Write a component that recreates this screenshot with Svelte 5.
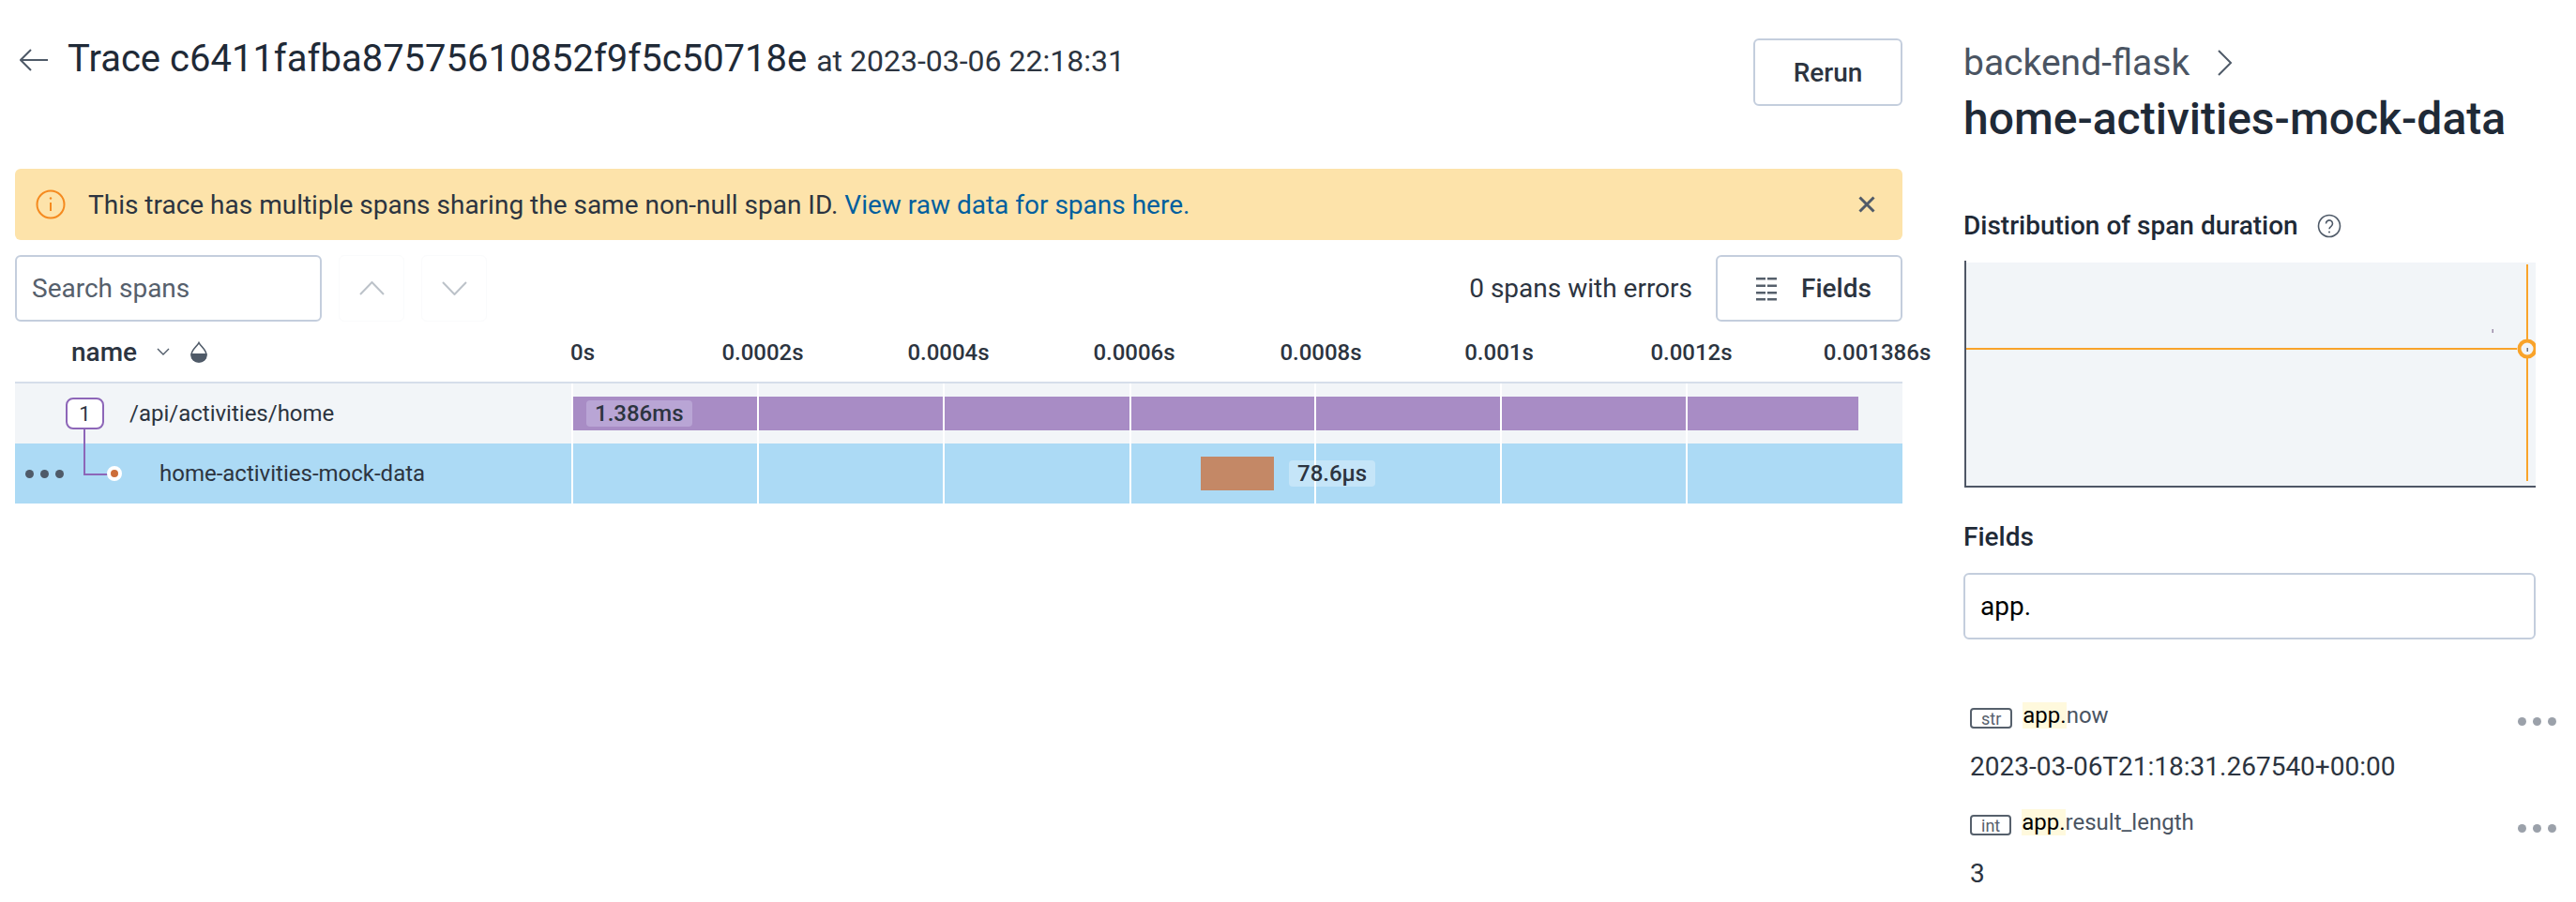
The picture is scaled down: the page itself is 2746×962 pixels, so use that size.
<script>
    const ticks = [
        { label: "0s", x: 12 },
        { label: "0.0002s", x: 204 },
        { label: "0.0004s", x: 402 },
        { label: "0.0006s", x: 600 },
        { label: "0.0008s", x: 799 },
        { label: "0.001s", x: 989 },
        { label: "0.0012s", x: 1194 },
        { label: "0.001386s", x: 1392 }
    ];
    const gridlines = [0, 198, 396, 595, 792, 990, 1188];

    const fields = [
        { type: "str", name: "now", value: "2023-03-06T21:18:31.267540+00:00" },
        { type: "int", name: "result_length", value: "3" }
    ];
</script>

<div class="page">
    <main class="main">
        <header class="top">
            <svg class="back" width="30" height="24" viewBox="0 0 30 24" fill="none" stroke="#4f5a68" stroke-width="2">
                <path d="M30 12H1M12 1 1 12l11 11" />
            </svg>
            <h1>Trace c6411fafba87575610852f9f5c50718e <small>at 2023-03-06 22:18:31</small></h1>
            <button class="btn rerun">Rerun</button>
        </header>

        <div class="banner">
            <svg width="32" height="32" viewBox="0 0 32 32" fill="none" stroke="#f58a1f" stroke-width="2">
                <circle cx="16" cy="16" r="14.5" />
                <path d="M16 14v9" />
                <circle cx="16" cy="9.5" r="1.2" fill="#f58a1f" stroke="none" />
            </svg>
            <p>This trace has multiple spans sharing the same non-null span ID. <a href="#raw">View raw data for spans here.</a></p>
            <svg class="close" width="18" height="18" viewBox="0 0 18 18" fill="none" stroke="#505a68" stroke-width="3">
                <path d="M1.500 1.500l15 15M16.500 1.500l-15 15" />
            </svg>
        </div>

        <div class="toolbar">
            <input class="search" placeholder="Search spans" />
            <button class="nav" aria-label="previous">
                <svg width="27" height="15" viewBox="0 0 27 15" fill="none" stroke="#bcc2c9" stroke-width="2"><path d="M1 14 13.500 1 26 14" /></svg>
            </button>
            <button class="nav" aria-label="next">
                <svg width="27" height="15" viewBox="0 0 27 15" fill="none" stroke="#bcc2c9" stroke-width="2"><path d="M1 1l12.500 13L26 1" /></svg>
            </button>
            <span class="errors">0 spans with errors</span>
            <button class="btn fields-btn">
                <svg width="22" height="26" viewBox="0 0 22 26" fill="#56606c">
                    <path d="M0 1h10v2.500H0zM12 1h10v2.500H12zM0 8.500h10v2.500H0zM12 8.500h10v2.500H12zM0 16h10v2.500H0zM12 16h10v2.500H12zM0 23h10v2.500H0zM12 23h10v2.500H12z" />
                </svg>
                Fields
            </button>
        </div>

        <div class="thead">
            <div class="name-col head-name">
                <span>name</span>
                <svg width="14" height="8" viewBox="0 0 14 8" fill="none" stroke="#4f5a68" stroke-width="1.4"><path d="M1 1l6 6 6-6" /></svg>
                <svg class="drop" width="18" height="23" viewBox="0 0 18 23">
                    <path d="M9 1.500C7 5.500 1 9 1 14.500a8 7.500 0 0 0 16 0C17 9 11 5.500 9 1.500Z" fill="#fff" stroke="#4f5a68" stroke-width="1.6" />
                    <path d="M.5 13h17v1.500a8.500 8 0 0 1-17 0Z" fill="#4f5a68" />
                </svg>
            </div>
            <div class="axis">
                {#each ticks as tick}
                    <span class="tick" style="left: {tick.x}px">{tick.label}</span>
                {/each}
            </div>
        </div>

        <div class="row root">
            <div class="name-col">
                <span class="count">1</span>
                <span class="span-name">/api/activities/home</span>
            </div>
            <div class="timeline">
                <div class="bar purple"></div>
                {#each gridlines as g}
                    <i class="grid" style="left: {g}px"></i>
                {/each}
                <span class="bar-label root-label">1.386ms</span>
            </div>
        </div>

        <div class="row selected">
            <div class="name-col">
                <span class="more"><i></i><i></i><i></i></span>
                <span class="elbow"></span>
                <span class="node"></span>
                <span class="span-name child">home-activities-mock-data</span>
            </div>
            <div class="timeline">
                <div class="bar orange"></div>
                {#each gridlines as g}
                    <i class="grid" style="left: {g}px"></i>
                {/each}
                <span class="bar-label child-label">78.6μs</span>
            </div>
        </div>
    </main>

    <aside class="side">
        <div class="crumb">
            <span>backend-flask</span>
            <svg width="16" height="28" viewBox="0 0 16 28" fill="none" stroke="#4f5a68" stroke-width="2"><path d="M1 1l13 13L1 27" /></svg>
        </div>
        <h2>home-activities-mock-data</h2>

        <h3 class="dist">
            Distribution of span duration
            <svg width="26" height="26" viewBox="0 0 26 26" fill="none" stroke="#4f5a68" stroke-width="1.6">
                <circle cx="13" cy="13" r="11.500" />
                <path d="M9.500 10.500a3.500 3.500 0 1 1 5.500 2.800c-1.300.9-2 1.500-2 3" />
                <circle cx="13" cy="19.500" r="1" fill="#4f5a68" stroke="none" />
            </svg>
        </h3>

        <svg class="chart" width="609" height="243" viewBox="0 0 609 243">
            <rect x="2" y="2" width="607" height="239" fill="#f2f5f8" />
            <path d="M1 0V241H609" fill="none" stroke="#4f5766" stroke-width="2" />
            <path d="M2 94H589M600 4V235" fill="none" stroke="#f9a32a" stroke-width="2" />
            <circle cx="600" cy="94" r="8.500" fill="#f2f5f8" stroke="#f9a32a" stroke-width="4" />
            <rect x="599.500" y="93" width="1.500" height="4" fill="#6d7280" />
            <rect x="562.500" y="73" width="1.500" height="4" fill="#9b8ba8" />
        </svg>

        <h3 class="fields-title">Fields</h3>
        <input class="field-search" value="app." />

        <div class="field-list">
            {#each fields as f}
                <div class="field">
                    <div class="field-head">
                        <span class="badge">{f.type}</span>
                        <span class="field-name"><mark>app.</mark>{f.name}</span>
                        <span class="more grey"><i></i><i></i><i></i></span>
                    </div>
                    <div class="field-value">{f.value}</div>
                </div>
            {/each}
        </div>
    </aside>
</div>

<style>
    :global(body) {
        background: #fff;
        font-family: Roboto, sans-serif;
        color: #2c3440;
    }

    .page {
        display: flex;
        gap: 65px;
        width: 2746px;
        height: 962px;
        padding-left: 16px;
        box-sizing: border-box;
        overflow: hidden;
    }

    .main {
        width: 2012px;
        flex: none;
    }

    .top {
        display: flex;
        align-items: flex-start;
        height: 72px;
        margin-top: 41px;
    }

    .back {
        margin: 11px 21px 0 5px;
        flex: none;
    }

    h1 {
        margin: 0;
        font-size: 40px;
        line-height: 44px;
        font-weight: 400;
        color: #1f2a37;
        white-space: nowrap;
    }

    h1 small {
        font-size: 32px;
        color: #2c3440;
    }

    .btn {
        border: 2px solid #c4cedd;
        border-radius: 6px;
        background: #fff;
        font: 500 28px Roboto, sans-serif;
        color: #2c3440;
    }

    .rerun {
        margin-left: auto;
        width: 159px;
        height: 72px;
    }

    .banner {
        display: flex;
        align-items: center;
        height: 76px;
        margin-top: 67px;
        padding: 0 29px 0 22px;
        background: #fde3aa;
        border-radius: 6px;
        font-size: 28px;
    }

    .banner p {
        margin: 0 0 0 24px;
        color: #2c3440;
    }

    .banner a {
        color: #005f9e;
        text-decoration: none;
    }

    .close {
        margin-left: auto;
    }

    .toolbar {
        display: flex;
        align-items: center;
        height: 71px;
        margin-top: 16px;
    }

    .search {
        width: 327px;
        height: 71px;
        box-sizing: border-box;
        padding: 0 16px;
        border: 2px solid #c4cedd;
        border-radius: 6px;
        font: 28px Roboto, sans-serif;
    }

    .search::placeholder {
        color: #56606c;
        opacity: 1;
    }

    .nav {
        width: 70px;
        height: 71px;
        padding: 0;
        background: #fff;
        border: 1px solid #fafbfc;
        border-radius: 6px;
        margin-left: 18px;
        display: flex;
        align-items: center;
        justify-content: center;
    }

    .errors {
        margin-left: auto;
        font-size: 28px;
    }

    .fields-btn {
        display: flex;
        align-items: center;
        justify-content: center;
        gap: 26px;
        width: 199px;
        height: 71px;
        margin-left: 25px;
        padding-left: 16px;
    }

    .thead {
        display: flex;
        align-items: center;
        height: 66px;
        border-bottom: 2px solid #d6deea;
        box-sizing: border-box;
    }

    .name-col {
        position: relative;
        display: flex;
        align-items: center;
        width: 593px;
        flex: none;
        box-sizing: border-box;
    }

    .head-name {
        padding-left: 60px;
        font-size: 28px;
        font-weight: 500;
    }

    .head-name svg {
        margin-left: 21px;
    }

    .head-name .drop {
        margin-left: 22px;
    }

    .axis {
        position: relative;
        flex: 1;
        height: 100%;
    }

    .tick {
        position: absolute;
        top: 19px;
        transform: translateX(-50%);
        font-size: 24px;
        font-weight: 500;
        line-height: 28px;
        white-space: nowrap;
    }

    .row {
        display: flex;
        height: 64px;
    }

    .root {
        background: #f2f5f8;
    }

    .selected {
        background: #acdaf5;
    }

    .count {
        margin-left: 54px;
        width: 41px;
        height: 34px;
        box-sizing: border-box;
        display: flex;
        align-items: center;
        justify-content: center;
        background: #fff;
        border: 2px solid #8d66b8;
        border-radius: 8px;
        font-size: 22px;
    }

    .span-name {
        margin-left: 27px;
        font-size: 24px;
    }

    .span-name.child {
        margin-left: 154px;
    }

    .more {
        display: flex;
        gap: 7px;
    }

    .more i {
        width: 9px;
        height: 9px;
        border-radius: 50%;
        background: #4f5a68;
    }

    .name-col > .more {
        position: absolute;
        left: 11px;
        top: 28px;
    }

    .elbow {
        position: absolute;
        left: 73px;
        top: -15px;
        width: 25px;
        height: 47px;
        border-left: 2px solid #8d66b8;
        border-bottom: 2px solid #8d66b8;
    }

    .node {
        position: absolute;
        left: 98px;
        top: 24px;
        width: 8px;
        height: 8px;
        border: 4px solid #fff;
        border-radius: 50%;
        background: #cc6d39;
        box-sizing: content-box;
    }

    .timeline {
        position: relative;
        flex: 1;
    }

    .grid {
        position: absolute;
        top: 0;
        bottom: 0;
        width: 2px;
        background: #fff;
    }

    .bar {
        position: absolute;
        top: 14px;
        height: 36px;
    }

    .purple {
        left: 2px;
        width: 1370px;
        background: #a88cc5;
    }

    .orange {
        left: 671px;
        width: 78px;
        background: #c48866;
    }

    .bar-label {
        position: absolute;
        top: 18px;
        height: 28px;
        line-height: 28px;
        padding: 0 9px;
        border-radius: 4px;
        font-size: 24px;
        font-weight: 500;
        background: rgba(255, 255, 255, 0.3);
    }

    .root-label {
        left: 16px;
        background: #b9a5d5;
    }

    .child-label {
        left: 765px;
    }

    .side {
        width: 632px;
        flex: none;
    }

    .crumb {
        display: flex;
        align-items: center;
        gap: 30px;
        height: 40px;
        margin-top: 47px;
        font-size: 39px;
        color: #4a5462;
    }

    h2 {
        margin: 12px 0 0;
        font-size: 48px;
        line-height: 56px;
        font-weight: 500;
        color: #1f2a37;
        white-space: nowrap;
    }

    h3 {
        margin: 0;
        font-size: 28px;
        line-height: 32px;
        font-weight: 500;
        color: #1f2a37;
    }

    .dist {
        display: flex;
        align-items: center;
        gap: 20px;
        margin-top: 70px;
    }

    .chart {
        display: block;
        margin: 21px 0 0 1px;
    }

    .fields-title {
        margin-top: 36px;
    }

    .field-search {
        display: block;
        width: 610px;
        height: 71px;
        box-sizing: border-box;
        margin-top: 22px;
        padding: 0 16px;
        border: 2px solid #c4cedd;
        border-radius: 6px;
        font: 28px Roboto, sans-serif;
        color: #000;
    }

    .field-list {
        margin-top: 67px;
        padding-left: 7px;
    }

    .field {
        margin-bottom: 29px;
    }

    .field-head {
        display: flex;
        align-items: flex-end;
        height: 28px;
    }

    .badge {
        box-sizing: border-box;
        height: 22px;
        padding: 0 10px;
        border: 2px solid #56606c;
        border-radius: 4px;
        font-size: 18px;
        line-height: 19px;
        color: #56606c;
    }

    .field-name {
        margin-left: 11px;
        font-size: 24px;
        line-height: 28px;
        color: #4a5462;
    }

    mark {
        background: #fff9dd;
        color: #000;
    }

    .more.grey {
        position: relative;
        top: -3px;
        margin-left: auto;
    }

    .more.grey i {
        background: #9ba1aa;
    }

    .field-value {
        margin-top: 25px;
        font-size: 28px;
        line-height: 32px;
        color: #2c3440;
    }
</style>
